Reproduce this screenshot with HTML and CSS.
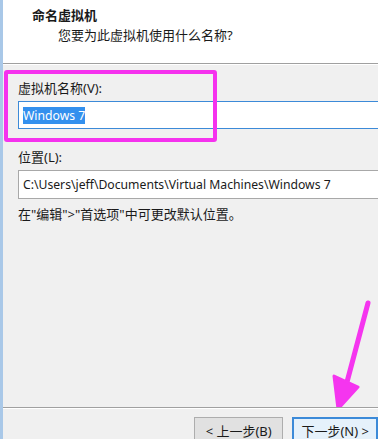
FILE: index.html
```html
<!DOCTYPE html>
<html lang="zh-CN">
<head>
  <meta charset="UTF-8" />
  <title>新建虚拟机向导</title>
  <link rel="stylesheet" href="styles.css">
</head>
<body>
  <div class="wizard">
    <div class="header">
      <h1>命名虚拟机</h1>
      <p>您要为此虚拟机使用什么名称?</p>
    </div>

    <div class="content">
      <label class="field-label" for="vmName">虚拟机名称(V):</label>
      <div class="input focused" id="vmName"><span class="selected">Windows 7</span></div>

      <label class="field-label second" for="vmPath">位置(L):</label>
      <div class="input" id="vmPath">C:\Users\jeff\Documents\Virtual Machines\Windows 7</div>

      <p class="hint">在"编辑"&gt;"首选项"中可更改默认位置。</p>

      <!-- annotations drawn over the dialog -->
      <div class="mark-box"></div>
      <svg class="mark-arrow" width="58" height="125" viewBox="0 0 58 125">
        <path d="M48 9 L27 88" stroke="#f535ef" stroke-width="5" stroke-linecap="round" fill="none"/>
        <path d="M14 82 L18 115 L38 93 Z" fill="#f535ef" stroke="#f535ef" stroke-width="3" stroke-linejoin="round"/>
      </svg>
    </div>

    <div class="footer">
      <button type="button" class="btn">&lt; 上一步(B)</button>
      <button type="button" class="btn primary">下一步(N) &gt;</button>
    </div>
  </div>
</body>
</html>
```

FILE: styles.css
```css
* {
  box-sizing: border-box;
}

html, body {
  margin: 0;
  height: 100%;
  overflow: hidden;
}

body {
  font-family: "Noto Sans", "Noto Sans CJK SC", sans-serif;
  font-size: 13px;
  color: #1a1a1a;
  background: #f0f0f0;
}

.wizard {
  position: relative;
  height: 439px;
  display: flex;
  flex-direction: column;
  border-left: 3px solid #a9c8e8;
  overflow: hidden;
}

.header {
  height: 64px;
  background: #ffffff;
  border-bottom: 1px solid #a0a0a0;
  padding: 6px 0 0 29px;
}

.header h1 {
  margin: 0;
  font-size: 13px;
  font-weight: 700;
  line-height: 18px;
}

.header p {
  margin: 2px 0 0 26px;
  line-height: 18px;
}

.content {
  position: relative;
  flex: 1;
  padding: 14px 0 0 15px;
  border-top: 1px solid #ffffff;
  overflow: hidden;
}

.field-label {
  display: block;
  line-height: 18px;
}

.field-label.second {
  margin-top: 19px;
}

.input {
  margin-top: 4px;
  margin-right: -20px;
  height: 29px;
  padding: 3px 4px;
  background: #ffffff;
  border: 1px solid #a8a8a8;
  line-height: 21px;
  white-space: nowrap;
  font-size: 12.2px;
}

.input.focused {
  border-color: #3c8ad8;
  height: 28px;
}

.selected {
  background: #3390ee;
  color: #ffffff;
}

.hint {
  margin: 6px 0 0;
  line-height: 18px;
}

.mark-box {
  position: absolute;
  left: 1px;
  top: 5px;
  width: 213px;
  height: 72px;
  border: 4px solid #f532ee;
  border-radius: 3px;
}

.mark-arrow {
  position: absolute;
  left: 317px;
  top: 229px;
}

.footer {
  height: 32px;
  border-top: 1px solid #a0a0a0;
  box-shadow: inset 0 1px 0 #ffffff;
  padding: 9px 0 0 191px;
  display: flex;
  gap: 9px;
}

.btn {
  font-family: inherit;
  font-size: 13px;
  height: 26px;
  width: 94px;
  padding: 0;
  color: #1a1a1a;
  background: #e1e1e1;
  border: 1px solid #adadad;
}

.btn.primary {
  width: 90px;
  background: #e5f1fb;
  border: 2px solid #3c8ad8;
}
```
